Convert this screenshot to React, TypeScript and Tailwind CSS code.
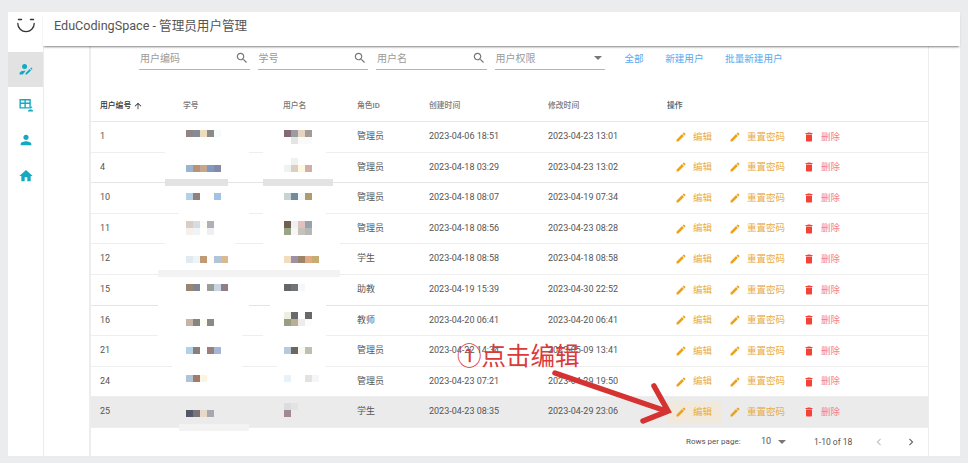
// 管理员用户管理 page, with the redaction mosaics and the red annotation on top
const editPath =
  "M3 17.25V21h3.75L17.81 9.94l-3.75-3.75L3 17.25zM20.71 7.04c.39-.39.39-1.02 0-1.41l-2.34-2.34c-.39-.39-1.02-.39-1.41 0l-1.83 1.83 3.75 3.75 1.83-1.83z";
const deletePath =
  "M6 19c0 1.1.9 2 2 2h8c1.1 0 2-.9 2-2V7H6v12zM19 4h-3.5l-1-1h-5l-1 1H5v2h14V4z";
const searchPath =
  "M15.5 14h-.79l-.28-.27C15.41 12.59 16 11.11 16 9.5 16 5.91 13.09 3 9.5 3S3 5.91 3 9.5 5.91 16 9.5 16c1.61 0 3.09-.59 4.23-1.57l.27.28v.79l5 4.99L20.49 19l-4.99-5zm-6 0C7.01 14 5 11.99 5 9.5S7.01 5 9.5 5 14 7.01 14 9.5 11.99 14 9.5 14z";

interface User {
  id: number;
  role: string;
  created: string;
  updated: string;
}

const users: User[] = [
  { id: 1, role: "管理员", created: "2023-04-06 18:51", updated: "2023-04-23 13:01" },
  { id: 4, role: "管理员", created: "2023-04-18 03:29", updated: "2023-04-23 13:02" },
  { id: 10, role: "管理员", created: "2023-04-18 08:07", updated: "2023-04-19 07:34" },
  { id: 11, role: "管理员", created: "2023-04-18 08:56", updated: "2023-04-23 08:28" },
  { id: 12, role: "学生", created: "2023-04-18 08:58", updated: "2023-04-18 08:58" },
  { id: 15, role: "助教", created: "2023-04-19 15:39", updated: "2023-04-30 22:52" },
  { id: 16, role: "教师", created: "2023-04-20 06:41", updated: "2023-04-20 06:41" },
  { id: 21, role: "管理员", created: "2023-04-22 14:34", updated: "2023-05-09 13:41" },
  { id: 24, role: "管理员", created: "2023-04-23 07:21", updated: "2023-04-29 19:50" },
  { id: 25, role: "学生", created: "2023-04-23 08:35", updated: "2023-04-29 23:06" },
];

// x, y, width, height, colour of the pieces painted over the row lines
const covers: [number, number, number, number, string][] = [
  [165, 147, 84, 10, "#fff"],
  [263, 147, 63, 10, "#fff"],
  [165, 179, 63, 7, "#e3e3e3"],
  [263, 179, 70, 7, "#e3e3e3"],
  [179, 209, 70, 8, "#fff"],
  [263, 209, 63, 8, "#fff"],
  [165, 240, 70, 7, "#fff"],
  [263, 240, 77, 7, "#fff"],
  [158, 270, 182, 7, "#f3f3f3"],
  [158, 301, 91, 7, "#fff"],
  [270, 301, 56, 7, "#fff"],
  [158, 332, 84, 7, "#fff"],
  [263, 332, 63, 7, "#fff"],
  [172, 362, 70, 7, "#fff"],
  [277, 362, 49, 7, "#fff"],
  [172, 389, 70, 7, "#fff"],
  [263, 389, 63, 7, "#fff"],
  [179, 424, 70, 7, "#f3f3f3"],
];

// x, y of the first block, then one colour per 7px block, "" leaves a gap
const mosaics: [number, number, string[]][] = [
  [186, 130, ["#8f8684", "#858b99", "#ecdcc0", "#8b8a87", "#f6fbfb"]],
  [284, 130, ["#846a74", "#9b9ba2", "#e6d4c2", "#a39c96"]],
  [291, 137, ["#e4e4e4", "#f9fbfb", "#f9fbfb"]],
  [186, 165, ["#9ab5d1", "#bb9175", "#c5a78d", "#7f9abc", "#8289aa"]],
  [291, 158, ["#f0f1f1"]],
  [284, 165, ["#edf3f5", "#dbcfc2", "#fcf9de", "#d2aea6"]],
  [186, 193, ["#b0d2e8", "#94807a", "", "#fdfdf9", "#a3c1e2"]],
  [284, 193, ["#c8d4d4", "#6f8b9c", "#f5f8fb", "#b09b6c"]],
  [186, 221, ["#d9cdc4", "#d2dde8", "#fdfbf6", "#afb0b5"]],
  [186, 228, ["#f5f0ec", "#f1f4f6", "", "#edeff3"]],
  [284, 221, ["#725f54", "#eff0f2", "#e2c1bc", "#94a3ae"]],
  [284, 228, ["#9aa585", "#f7f7f7", "#c3c3bc", "#b7b7b7"]],
  [186, 256, ["#e1e9f1", "#eef5f8", "#c09a75", "#fefdf8", "#b2c4da", "#dcb88f"]],
  [284, 256, ["#f2dcbf", "#9b90a6", "#9b8468", "#e0aa86", "#c6ab73"]],
  [186, 284, ["#9a8573", "#7f8491", "", "#9c9d98", "#c6d4e4", "#8f7e88"]],
  [284, 284, ["#656669", "#737373", "#f3f8fb"]],
  [186, 319, ["#c6b4a6", "#87857f", "#fdfcf5", "#8a8a87"]],
  [284, 312, ["#eeeee3", "#696969", "", "#696969"]],
  [284, 319, ["#9a9c83", "#b9ad96", "#eeecea", "#f9fdfc"]],
  [186, 347, ["#b0d2e8", "#8a7f7b", "", "#9a807a", "#a5b7d8"]],
  [284, 347, ["#b7cadb", "#6e6761", "#f8f9f5", "#c0bfae"]],
  [186, 375, ["#afc3da", "#a37a68", "#fdf3e1"]],
  [284, 375, ["#e8f2f9", "", "", "#e3e2de", "#f5f6f8"]],
  [186, 410, ["#535868", "#7b7379", "#e6d9c8", "#a9a6b1"]],
  [284, 403, ["#d9dde0", "#e3e3e4"]],
  [284, 410, ["#a18892"]],
];

const columns = "grid grid-cols-[81px_100px_74px_72px_119px_119px_1fr] items-center";

function FilterField({ label }: { label: string }) {
  return (
    <div className="flex h-[24px] w-[110.5px] items-center justify-between border-b border-[#b4b4b4] pr-px pl-px text-[10px] text-[#9a9a9a]">
      <span className="translate-y-px">{label}</span>
      <svg viewBox="0 0 24 24" className="h-[14px] w-[14px] fill-[#777]">
        <path d={searchPath} />
      </svg>
    </div>
  );
}

function RowActions({ hovered }: { hovered: boolean }) {
  return (
    <div className="flex items-center text-[9.5px]">
      <div
        className={`flex h-[23px] w-[55px] items-center gap-[6px] rounded-[3px] pl-[8px] text-[#e9ab45] ${
          hovered ? "bg-[#f1e9dc]" : ""
        }`}
      >
        <svg viewBox="0 0 24 24" className="h-[12px] w-[12px] fill-[#eda21b]">
          <path d={editPath} />
        </svg>
        编辑
      </div>
      <div className="flex h-[23px] w-[75px] items-center gap-[6px] pl-[7px] text-[#e9ab45]">
        <svg viewBox="0 0 24 24" className="h-[12px] w-[12px] fill-[#eda21b]">
          <path d={editPath} />
        </svg>
        重置密码
      </div>
      <div className="flex h-[23px] items-center gap-[6px] pl-[6px] text-[#f6808a]">
        <svg viewBox="0 0 24 24" className="h-[12px] w-[12px] fill-[#f44336]">
          <path d={deletePath} />
        </svg>
        删除
      </div>
    </div>
  );
}

function Sidebar() {
  return (
    <div className="flex w-[36px] shrink-0 flex-col border-r border-[#ececec] pt-[6px]">
      <div className="flex h-[35px] items-center justify-center bg-[#e2e2e2]">
        <svg viewBox="0 0 24 24" className="h-[15px] w-[15px] fill-[#14a9c2]">
          <circle cx="10.5" cy="7" r="4" />
          <path d="M2.5 20v-2c0-2.7 5-4 8-4 .6 0 1.2 0 1.9.1L7.5 20h-5z" />
          <path d="M12 20v-2.2l6.6-6.6 2.2 2.2L14.2 20H12zM19.6 10.2l1-1c.3-.3.7-.3 1 0l1.2 1.2c.3.3.3.7 0 1l-1 1-2.2-2.2z" />
        </svg>
      </div>
      <div className="flex h-[35.5px] items-center justify-center">
        <svg viewBox="0 0 24 24" className="h-[14px] w-[14px]">
          <path d="M2 3h17v14H2zM2 9h17M10.500 3v14" fill="none" stroke="#14a9c2" strokeWidth="2.400" />
          <circle cx="20" cy="16" r="2.200" fill="#14a9c2" stroke="#fff" strokeWidth="0.500" />
          <path d="M15.500 23v-1c0-1.500 3-2.300 4.500-2.300s4 .8 4 2.300v1h-8.500z" fill="#14a9c2" />
        </svg>
      </div>
      <div className="flex h-[35.5px] items-center justify-center">
        <svg viewBox="0 0 24 24" className="h-[16px] w-[16px] fill-[#14a9c2]">
          <path d="M12 12c2.210 0 4-1.790 4-4s-1.790-4-4-4-4 1.790-4 4 1.790 4 4 4zm0 2c-2.670 0-8 1.340-8 4v2h16v-2c0-2.660-5.330-4-8-4z" />
        </svg>
      </div>
      <div className="flex h-[35.5px] items-center justify-center">
        <svg viewBox="0 0 24 24" className="h-[16px] w-[16px] fill-[#14a9c2]">
          <path d="M10 20v-6h4v6h5v-8h3L12 3 2 12h3v8z" />
        </svg>
      </div>
    </div>
  );
}

export default function App() {
  return (
    <div className="relative h-[463px] w-[968px] overflow-hidden bg-[#ebecee] pt-[12px] pr-[8px] pb-[7px] pl-[8px] font-['Roboto','Noto_Sans_CJK_SC',sans-serif]">
      <div className="flex h-full flex-col bg-white">
        {/* top bar */}
        <div className="relative z-10 flex h-[34px] shrink-0">
          <div className="flex w-[35px] items-center justify-center bg-white pb-[5px]">
            <svg viewBox="0 0 20 20" className="h-[20px] w-[20px]" fill="none" stroke="#333" strokeLinecap="round">
              <path d="M1.800 6.500a8.200 8.200 0 1 0 16.400 0" strokeWidth="1.300" />
              <path d="M2.500 2.500h3M14.500 2.500h3" strokeWidth="1.400" />
            </svg>
          </div>
          <div className="flex flex-1 items-center bg-white pb-[6px] pl-[11px] text-[12.6px] text-[#555] shadow-[0_2px_2px_-1px_rgba(0,0,0,0.5)]">
            EduCodingSpace - 管理员用户管理
          </div>
        </div>

        <div className="flex min-h-0 flex-1">
          <Sidebar />
          <div className="w-[45px] shrink-0" />

          {/* table card */}
          <div className="flex w-[840px] shrink-0 flex-col border-r border-l-2 border-[#ededed]">
            <div className="flex items-center pl-[48px]">
              <div className="flex gap-[8px]">
                <FilterField label="用户编码" />
                <FilterField label="学号" />
                <FilterField label="用户名" />
                <div className="flex h-[24px] w-[110px] items-center justify-between border-b border-[#b4b4b4] pr-[3px] pl-px text-[10px] text-[#9a9a9a]">
                  <span className="translate-y-px">用户权限</span>
                  <span className="h-0 w-0 border-x-[4px] border-t-[4px] border-x-transparent border-t-[#777]" />
                </div>
              </div>
              <div className="ml-[20px] flex translate-y-px gap-[21.5px] text-[9.6px] text-[#5aa9ee]">
                <span>全部</span>
                <span>新建用户</span>
                <span>批量新建用户</span>
              </div>
            </div>

            <div className={`${columns} mt-[21px] h-[31px] border-b border-[#e8e8e8] text-[7.8px] font-medium text-[#777]`}>
              <div className="flex items-center gap-[2px] pl-[9px] text-[#333]">
                用户编号
                <svg viewBox="0 0 24 24" className="h-[10px] w-[10px] fill-[#333]">
                  <path d="M4 12l1.410 1.410L11 7.830V20h2V7.830l5.580 5.590L20 12l-8-8-8 8z" />
                </svg>
              </div>
              <div className="pl-[11px]">学号</div>
              <div className="pl-[11px]">用户名</div>
              <div className="pl-[11px]">角色ID</div>
              <div className="pl-[11px]">创建时间</div>
              <div className="pl-[11px]">修改时间</div>
              <div className="pl-[11px] text-[#555]">操作</div>
            </div>

            {users.map((user) => (
              <div
                key={user.id}
                className={`${columns} h-[30.6px] border-b text-[9px] text-[#555] ${
                  user.id === 4 || user.id === 15 ? "border-[#e4e4e4]" : "border-[#eeeeee]"
                } ${user.id === 25 ? "bg-[#ebebeb]" : ""}`}
              >
                <div className="pl-[9px]">{user.id}</div>
                <div />
                <div />
                <div className="pl-[11px]">{user.role}</div>
                <div className="pl-[11px]">{user.created}</div>
                <div className="pl-[11px]">{user.updated}</div>
                <div className="pl-[11px]">
                  <RowActions hovered={user.id === 25} />
                </div>
              </div>
            ))}

            {/* pagination */}
            <div className="flex flex-1 items-center pl-[595px] text-[8px] text-[#555]">
              <span className="w-[75px]">Rows per page:</span>
              <span className="w-[17px] text-[9px]">10</span>
              <span className="h-0 w-0 border-x-[4px] border-t-[4px] border-x-transparent border-t-[#777]" />
              <span className="ml-[28px] w-[58px] text-[8.500px]">1-10 of 18</span>
              <svg viewBox="0 0 24 24" className="h-[14px] w-[14px] fill-[#c4c4c4]">
                <path d="M15.410 7.410 14 6l-6 6 6 6 1.410-1.410L10.830 12z" />
              </svg>
              <svg viewBox="0 0 24 24" className="ml-[18px] h-[14px] w-[14px] fill-[#666]">
                <path d="M10 6 8.590 7.410 13.170 12l-4.580 4.590L10 18l6-6z" />
              </svg>
            </div>
          </div>
        </div>
      </div>

      {/* redaction blocks painted over the table */}
      {covers.map(([x, y, w, h, color], i) => (
        <div key={i} className="absolute" style={{ left: x, top: y, width: w, height: h, background: color }} />
      ))}
      {mosaics.map(([x, y, colors], i) => (
        <div key={i} className="absolute flex" style={{ left: x, top: y }}>
          {colors.map((color, j) => (
            <div key={j} className="h-[7px] w-[7px]" style={{ background: color }} />
          ))}
        </div>
      ))}

      {/* red annotation */}
      <div className="absolute top-[339px] left-[457px] font-['Noto_Sans_CJK_SC',sans-serif] text-[24.5px] leading-[32px] whitespace-nowrap text-[#dc3a3a]">
        ①点击编辑
      </div>
      <svg className="pointer-events-none absolute top-0 left-0 h-[463px] w-[968px]" fill="none" stroke="#d53232" strokeWidth="5.500" strokeLinecap="round">
        <path d="M555 373L666 411M654 386L668 411L643 421" />
      </svg>
    </div>
  );
}
